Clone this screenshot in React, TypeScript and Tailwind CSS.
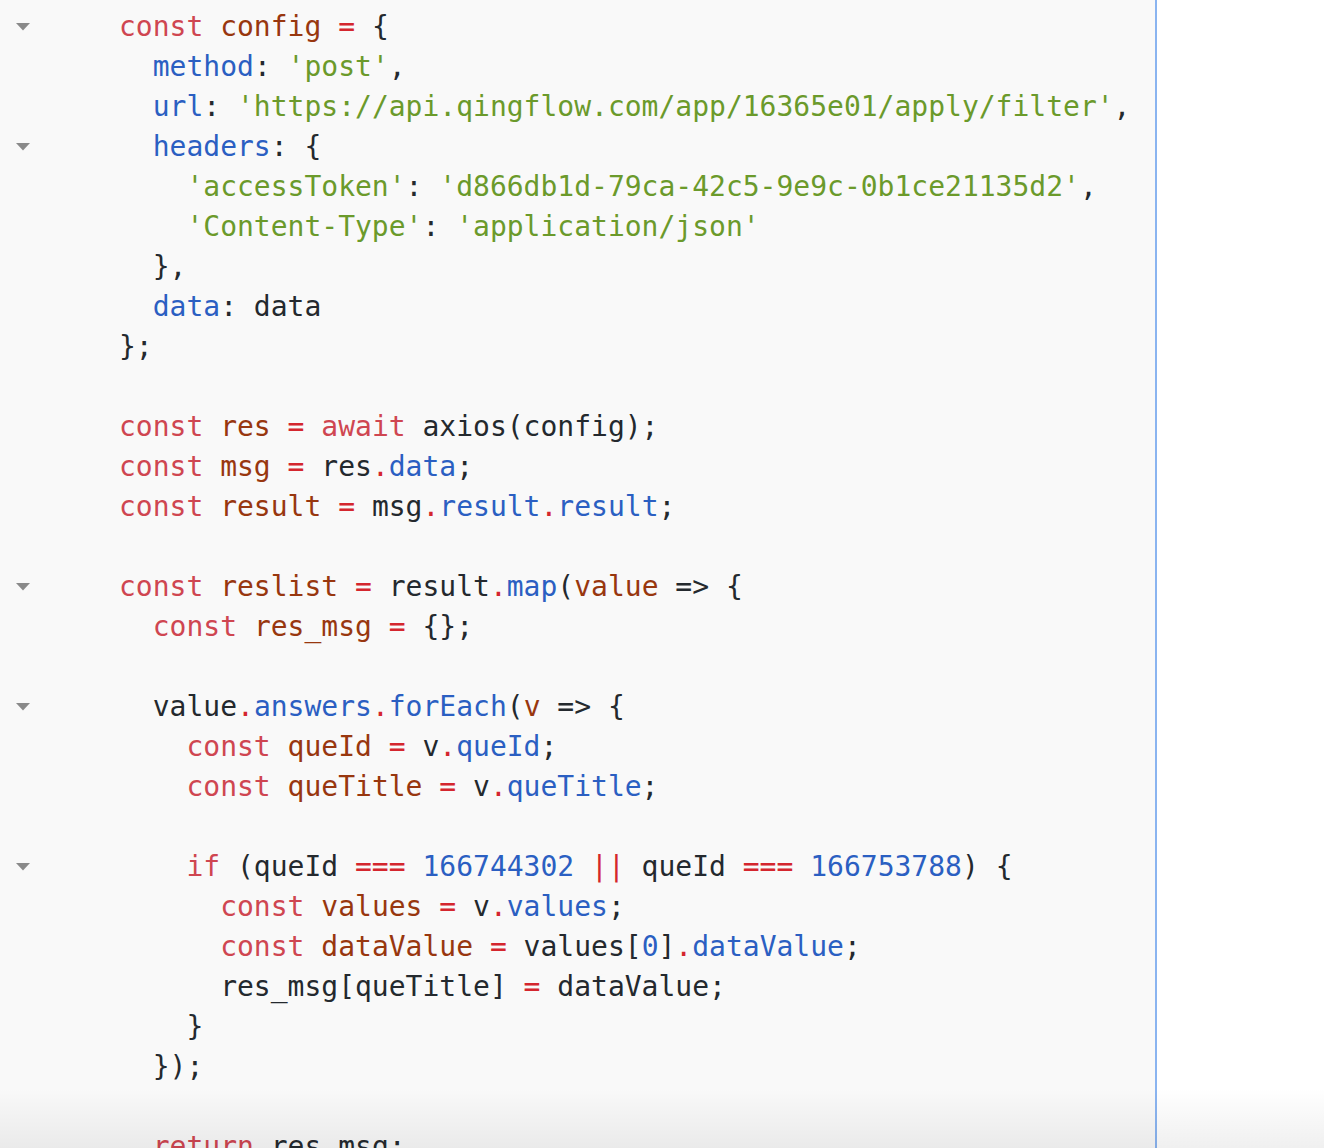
type Tok = [string, string]

const C: Record<string, string> = {
  k: "text-[#cf4651]",
  v: "text-[#98370f]",
  p: "text-[#2b5fc2]",
  s: "text-[#6b9a2b]",
  o: "text-[#d4262e]",
  t: "text-[#24292e]",
}

type Line = { indent: number; fold?: boolean; toks: Tok[] }

const decl = (name: string): Tok[] => [
  ["k", "const"],
  ["t", " "],
  ["v", name],
  ["t", " "],
  ["o", "="],
  ["t", " "],
]

const lines: Line[] = [
  { indent: 0, fold: true, toks: [...decl("config"), ["t", "{"]] },
  { indent: 1, toks: [["p", "method"], ["t", ": "], ["s", "'post'"], ["t", ","]] },
  {
    indent: 1,
    toks: [["p", "url"], ["t", ": "], ["s", "'https://api.qingflow.com/app/16365e01/apply/filter'"], ["t", ","]],
  },
  { indent: 1, fold: true, toks: [["p", "headers"], ["t", ": {"]] },
  {
    indent: 2,
    toks: [["s", "'accessToken'"], ["t", ": "], ["s", "'d866db1d-79ca-42c5-9e9c-0b1ce21135d2'"], ["t", ","]],
  },
  { indent: 2, toks: [["s", "'Content-Type'"], ["t", ": "], ["s", "'application/json'"]] },
  { indent: 1, toks: [["t", "},"]] },
  { indent: 1, toks: [["p", "data"], ["t", ": data"]] },
  { indent: 0, toks: [["t", "};"]] },
  { indent: 0, toks: [] },
  { indent: 0, toks: [...decl("res"), ["k", "await"], ["t", " axios(config);"]] },
  { indent: 0, toks: [...decl("msg"), ["t", "res"], ["o", "."], ["p", "data"], ["t", ";"]] },
  {
    indent: 0,
    toks: [...decl("result"), ["t", "msg"], ["o", "."], ["p", "result"], ["o", "."], ["p", "result"], ["t", ";"]],
  },
  { indent: 0, toks: [] },
  {
    indent: 0,
    fold: true,
    toks: [...decl("reslist"), ["t", "result"], ["o", "."], ["p", "map"], ["t", "("], ["v", "value"], ["t", " => {"]],
  },
  { indent: 1, toks: [...decl("res_msg"), ["t", "{};"]] },
  { indent: 0, toks: [] },
  {
    indent: 1,
    fold: true,
    toks: [
      ["t", "value"],
      ["o", "."],
      ["p", "answers"],
      ["o", "."],
      ["p", "forEach"],
      ["t", "("],
      ["v", "v"],
      ["t", " => {"],
    ],
  },
  { indent: 2, toks: [...decl("queId"), ["t", "v"], ["o", "."], ["p", "queId"], ["t", ";"]] },
  { indent: 2, toks: [...decl("queTitle"), ["t", "v"], ["o", "."], ["p", "queTitle"], ["t", ";"]] },
  { indent: 0, toks: [] },
  {
    indent: 2,
    fold: true,
    toks: [
      ["k", "if"],
      ["t", " (queId "],
      ["o", "==="],
      ["t", " "],
      ["p", "166744302"],
      ["t", " "],
      ["o", "||"],
      ["t", " queId "],
      ["o", "==="],
      ["t", " "],
      ["p", "166753788"],
      ["t", ") {"],
    ],
  },
  { indent: 3, toks: [...decl("values"), ["t", "v"], ["o", "."], ["p", "values"], ["t", ";"]] },
  {
    indent: 3,
    toks: [...decl("dataValue"), ["t", "values["], ["p", "0"], ["t", "]"], ["o", "."], ["p", "dataValue"], ["t", ";"]],
  },
  { indent: 3, toks: [["t", "res_msg[queTitle] "], ["o", "="], ["t", " dataValue;"]] },
  { indent: 2, toks: [["t", "}"]] },
  { indent: 1, toks: [["t", "});"]] },
  { indent: 0, toks: [] },
  { indent: 1, toks: [["k", "return"], ["t", " res_msg;"]] },
]

function FoldArrow() {
  return (
    <svg width="14" height="8" viewBox="0 0 14 8" className="block">
      <path d="M0 0 H14 L7 7.5 Z" fill="#8a8a8a" />
    </svg>
  )
}

export default function App() {
  return (
    <div className="relative flex h-[1148px] w-full overflow-hidden bg-white">
      <div
        className="w-[1155px] shrink-0 bg-[#f9f9f9] pt-[7px] text-[28px] leading-[40px]"
        style={{ fontFamily: '"DejaVu Sans Mono", "Liberation Mono", monospace' }}
      >
        {lines.map((line, i) => (
          <div key={i} className="flex h-[40px] items-center">
            <div className="flex w-[119px] shrink-0 items-center pl-[16px]">{line.fold && <FoldArrow />}</div>
            <div className="whitespace-pre">
              {"  ".repeat(line.indent)}
              {line.toks.map(([kind, text], j) => (
                <span key={j} className={C[kind]}>
                  {text}
                </span>
              ))}
            </div>
          </div>
        ))}
      </div>
      <div className="w-[2px] shrink-0 bg-[#8ab4f0]" />
      <div className="flex-1 bg-white" />
      <div className="pointer-events-none absolute inset-x-0 bottom-0 h-[60px] bg-gradient-to-b from-transparent to-black/[0.06]" />
    </div>
  )
}
